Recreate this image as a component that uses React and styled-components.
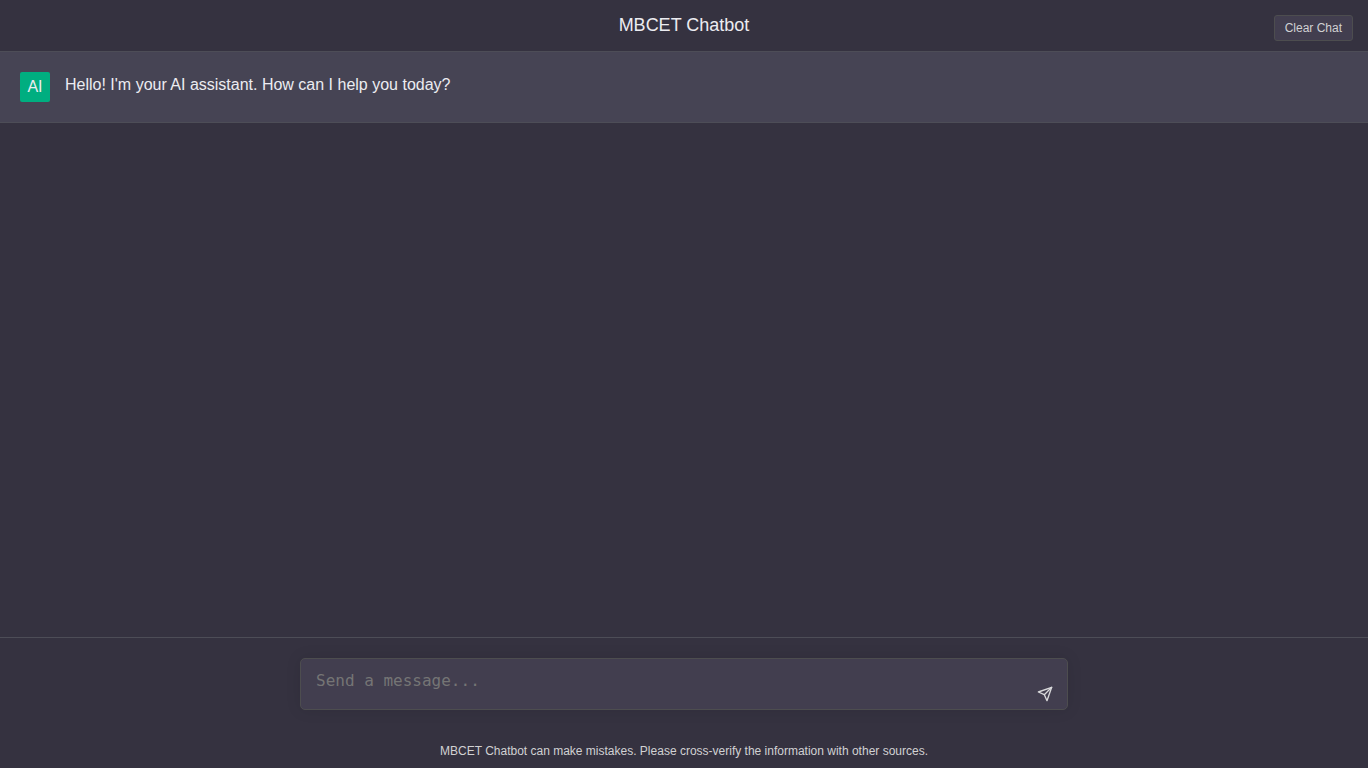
import React, { useState } from "react";
import styled, { createGlobalStyle } from "styled-components";

const GREETING = "Hello! I'm your AI assistant. How can I help you today?";

const GlobalStyle = createGlobalStyle`
  *, *::before, *::after { box-sizing: border-box; }
  body {
    margin: 0;
    background: #353240;
    color: #ececf1;
    font-family: "Liberation Sans", Arial, sans-serif;
    font-size: 16px;
  }
`;

const Page = styled.div`
  display: flex;
  flex-direction: column;
  height: 100vh;
`;

const Header = styled.header`
  display: grid;
  grid-template-columns: 1fr auto 1fr;
  align-items: start;
  padding: 15px 15px 10px;
  border-bottom: 1px solid #4d4d57;
`;

const Title = styled.h1`
  grid-column: 2;
  margin: 0;
  font-size: 18px;
  font-weight: 400;
  line-height: 20px;
`;

const ClearButton = styled.button`
  justify-self: end;
  padding: 5px 10px;
  border: 1px solid #4d4d4f;
  border-radius: 3px;
  background: #423e4f;
  color: #d1d1d3;
  font-family: inherit;
  font-size: 12px;
  line-height: 14px;
  cursor: pointer;
`;

const Messages = styled.main`
  flex: 1;
  overflow-y: auto;
`;

const Message = styled.article`
  display: flex;
  gap: 15px;
  padding: 20px;
  border-bottom: 1px solid #4d4d57;
  background: ${({ $fromUser }) => ($fromUser ? "#353240" : "#464454")};
`;

const Avatar = styled.div`
  display: flex;
  flex: none;
  align-items: center;
  justify-content: center;
  width: 30px;
  height: 30px;
  border-radius: 2px;
  background: ${({ $fromUser }) => ($fromUser ? "#5436da" : "#00ae80")};
  color: #ececf1;
`;

const MessageText = styled.p`
  flex: 1;
  margin: 0;
  line-height: 26px;
`;

const Footer = styled.footer`
  padding: 20px 20px 10px;
  border-top: 1px solid #4d4d57;
`;

const Composer = styled.form`
  display: flex;
  align-items: flex-end;
  max-width: 768px;
  margin: 0 auto;
  padding-right: 9px;
  border: 1px solid #4d4d4f;
  border-radius: 5px;
  background: #423e4f;
  box-shadow: 0 0 15px rgba(0, 0, 0, 0.1);
`;

const MessageInput = styled.textarea`
  flex: 1;
  display: block;
  height: 50px;
  padding: 12px 15px;
  border: 0;
  outline: 0;
  resize: none;
  background: transparent;
  color: #ececf1;
  font-family: "DejaVu Sans Mono", monospace;
  font-size: 16px;
  line-height: 19px;

  &::placeholder { color: #757575; }
`;

const SendButton = styled.button`
  display: flex;
  padding: 5px;
  margin-bottom: 2px;
  border: 0;
  background: transparent;
  color: #d9d9db;
  cursor: pointer;
`;

const Disclaimer = styled.p`
  margin: 34px 0 0;
  color: #d1d1d3;
  font-size: 12px;
  line-height: 14px;
  text-align: center;
`;

function SendIcon() {
  return (
    <svg
      width="16"
      height="16"
      viewBox="0 0 24 24"
      fill="none"
      stroke="currentColor"
      strokeWidth="2"
      strokeLinecap="round"
      strokeLinejoin="round"
      aria-hidden="true"
    >
      <path d="M22 2L11 13" />
      <path d="M22 2L15 22L11 13L2 9L22 2Z" />
    </svg>
  );
}

export default function App() {
  const [messages, setMessages] = useState([{ text: GREETING, fromUser: false }]);
  const [draft, setDraft] = useState("");

  const send = (event) => {
    event.preventDefault();
    if (!draft.trim()) return;
    setMessages([...messages, { text: draft, fromUser: true }]);
    setDraft("");
  };

  return (
    <Page>
      <GlobalStyle />
      <Header>
        <Title>MBCET Chatbot</Title>
        <ClearButton type="button" onClick={() => setMessages([])}>Clear Chat</ClearButton>
      </Header>
      <Messages>
        {messages.map(({ text, fromUser }, index) => (
          <Message key={index} $fromUser={fromUser}>
            <Avatar $fromUser={fromUser}>{fromUser ? "U" : "AI"}</Avatar>
            <MessageText>{text}</MessageText>
          </Message>
        ))}
      </Messages>
      <Footer>
        <Composer onSubmit={send}>
          <MessageInput
            aria-label="Message"
            rows={1}
            placeholder="Send a message..."
            value={draft}
            onChange={(event) => setDraft(event.target.value)}
          />
          <SendButton type="submit" aria-label="Send">
            <SendIcon />
          </SendButton>
        </Composer>
        <Disclaimer>
          MBCET Chatbot can make mistakes. Please cross-verify the information with other sources.
        </Disclaimer>
      </Footer>
    </Page>
  );
}
